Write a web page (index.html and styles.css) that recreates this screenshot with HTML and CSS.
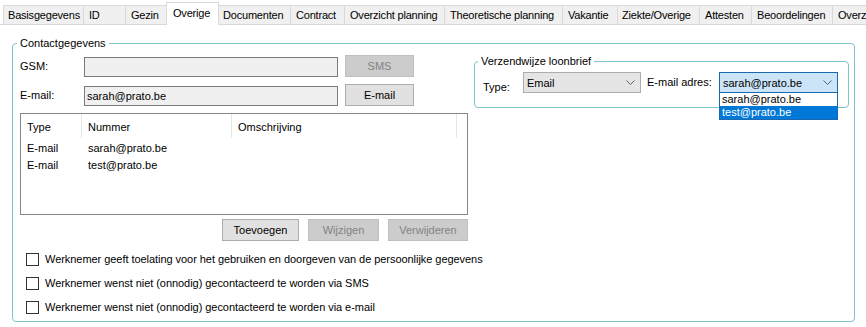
FILE: index.html
```html
<!DOCTYPE html>
<html lang="nl">
<head>
    <meta charset="UTF-8">
    <title>Werknemer - Overige</title>
    <link rel="stylesheet" href="styles.css">
</head>
<body>
    <div class="tabs">
        <div class="tab">Basisgegevens</div>
        <div class="tab">ID</div>
        <div class="tab">Gezin</div>
        <div class="tab active">Overige</div>
        <div class="tab">Documenten</div>
        <div class="tab">Contract</div>
        <div class="tab">Overzicht planning</div>
        <div class="tab">Theoretische planning</div>
        <div class="tab">Vakantie</div>
        <div class="tab">Ziekte/Overige</div>
        <div class="tab">Attesten</div>
        <div class="tab">Beoordelingen</div>
        <div class="tab">Overzicht</div>
    </div>

    <div class="group contact">
        <div class="group-title">Contactgegevens</div>
        <div class="contact-top">
            <div class="contact-left">
                <div class="field-row">
                    <span class="field-label">GSM:</span>
                    <div class="textbox"></div>
                    <button class="btn disabled">SMS</button>
                </div>
                <div class="field-row">
                    <span class="field-label">E-mail:</span>
                    <div class="textbox">sarah@prato.be</div>
                    <button class="btn">E-mail</button>
                </div>

                <div class="listview">
                    <div class="lv-row lv-header">
                        <div class="lv-cell col-type">Type</div>
                        <div class="lv-cell col-nr">Nummer</div>
                        <div class="lv-cell col-desc">Omschrijving</div>
                    </div>
                    <div class="lv-row">
                        <div class="lv-cell col-type">E-mail</div>
                        <div class="lv-cell col-nr">sarah@prato.be</div>
                        <div class="lv-cell col-desc"></div>
                    </div>
                    <div class="lv-row">
                        <div class="lv-cell col-type">E-mail</div>
                        <div class="lv-cell col-nr">test@prato.be</div>
                        <div class="lv-cell col-desc"></div>
                    </div>
                </div>

                <div class="list-buttons">
                    <button class="btn btn-add">Toevoegen</button>
                    <button class="btn btn-edit disabled">Wijzigen</button>
                    <button class="btn btn-del disabled">Verwijderen</button>
                </div>
            </div>

            <div class="group payslip">
                <div class="group-title">Verzendwijze loonbrief</div>
                <div class="payslip-row">
                    <span class="payslip-label type-label">Type:</span>
                    <div class="combo combo-type">
                        <span>Email</span>
                        <svg class="chevron" width="9" height="5" viewBox="0 0 9 5"><polyline points="0.5,0.5 4.5,4.5 8.5,0.5" fill="none" stroke="#606060"/></svg>
                    </div>
                    <span class="payslip-label mail-label">E-mail adres:</span>
                    <div class="combo combo-mail focused">
                        <span>sarah@prato.be</span>
                        <svg class="chevron" width="9" height="5" viewBox="0 0 9 5"><polyline points="0.5,0.5 4.5,4.5 8.5,0.5" fill="none" stroke="#606060"/></svg>
                        <div class="combo-list">
                            <div class="combo-item">sarah@prato.be</div>
                            <div class="combo-item selected">test@prato.be</div>
                        </div>
                    </div>
                </div>
            </div>
        </div>

        <div class="checks">
            <label class="check-row"><span class="checkbox"></span>Werknemer geeft toelating voor het gebruiken en doorgeven van de persoonlijke gegevens</label>
            <label class="check-row"><span class="checkbox"></span>Werknemer wenst niet (onnodig) gecontacteerd te worden via SMS</label>
            <label class="check-row"><span class="checkbox"></span>Werknemer wenst niet (onnodig) gecontacteerd te worden via e-mail</label>
        </div>
    </div>
</body>
</html>
```

FILE: styles.css
```css
body {
    margin: 0;
    background: #fff;
    font-family: "Liberation Sans", Arial, sans-serif;
    font-size: 11px;
    color: #000;
    overflow: hidden;
}

/* tab strip */
.tabs {
    display: flex;
    align-items: flex-end;
    height: 24px;
    padding-left: 3px;
    border-bottom: 1px solid #d9d9d9;
    white-space: nowrap;
    letter-spacing: -0.2px;
}
.tab {
    box-sizing: border-box;
    height: 19px;
    line-height: 18px;
    padding-left: 5px;
    background: #f0f0f0;
    border: 1px solid #d9d9d9;
    border-width: 1px 0 0 1px;
    flex-shrink: 0;
    overflow: hidden;
}
.tab.active {
    height: 23px;
    margin-bottom: -1px;
    line-height: 20px;
    padding-left: 6px;
    background: #fff;
    border-right-width: 1px;
    position: relative;
    z-index: 1;
}
.tab.active + .tab {
    border-left-width: 0;
}
.tab:nth-child(1) { width: 80px; padding-left: 4px; }
.tab:nth-child(2) { width: 42px; }
.tab:nth-child(3) { width: 41px; }
.tab:nth-child(4) { width: 53px; }
.tab:nth-child(5) { width: 71px; padding-left: 4px; }
.tab:nth-child(6) { width: 54px; }
.tab:nth-child(7) { width: 100px; }
.tab:nth-child(8) { width: 118px; }
.tab:nth-child(9) { width: 55px; }
.tab:nth-child(10) { width: 82px; padding-left: 4px; }
.tab:nth-child(11) { width: 52px; }
.tab:nth-child(12) { width: 81px; }
.tab:nth-child(13) { width: 90px; }

/* group boxes */
.group {
    box-sizing: border-box;
    border: 1px solid #7ec4cc;
    border-radius: 4px;
}
.group-title {
    width: fit-content;
    line-height: 13px;
    padding: 0 3px;
    margin-top: -7px;
    background: #fff;
}
.contact {
    width: 843px;
    margin: 18px 0 0 12px;
    padding: 0 4px 2px 7px;
}
.contact > .group-title {
    margin-left: -3px;
}
.contact-top {
    display: flex;
    align-items: flex-start;
    gap: 6px;
    margin-top: 5px;
}
.contact-left {
    width: 448px;
}

/* fields */
.field-row {
    display: flex;
    align-items: flex-end;
    height: 22px;
    margin-bottom: 7px;
}
.field-label {
    width: 64px;
    align-self: center;
}
.textbox {
    box-sizing: border-box;
    width: 254px;
    height: 20px;
    line-height: 18px;
    padding-left: 2px;
    margin-right: 7px;
    background: #f0f0f0;
    border: 1px solid #7a7a7a;
}
.btn {
    box-sizing: border-box;
    width: 69px;
    height: 22px;
    padding: 0;
    font: inherit;
    color: #000;
    background: #e1e1e1;
    border: 1px solid #adadad;
}
.btn.disabled {
    color: #838383;
    background: #cccccc;
    border-color: #bfbfbf;
}

/* list view */
.listview {
    box-sizing: border-box;
    height: 102px;
    border: 1px solid #828790;
}
.lv-row {
    display: flex;
    height: 17px;
    line-height: 17px;
}
.lv-header {
    height: 26px;
    line-height: 26px;
}
.lv-cell {
    box-sizing: border-box;
    padding-left: 6px;
    white-space: nowrap;
}
.lv-header .lv-cell {
    border-right: 1px solid #e5e5e5;
    height: 24px;
    line-height: 26px;
}
.col-type { width: 61px; }
.col-nr { width: 150px; }
.col-desc { width: 225px; }

.list-buttons {
    display: flex;
    justify-content: flex-end;
    gap: 9px;
    margin-top: 4px;
}
.btn-add { width: 77px; }
.btn-edit { width: 71px; }
.btn-del { width: 80px; }

/* verzendwijze loonbrief */
.payslip {
    width: 375px;
    margin-top: 6px;
    padding: 0 10px 14px 8px;
}
.payslip > .group-title {
    margin-left: -5px;
}
.payslip-row {
    display: flex;
    height: 21px;
    margin-top: 4px;
}
.payslip-label {
    line-height: 13px;
}
.type-label {
    width: 40px;
    padding-top: 9px;
}
.mail-label {
    width: 72px;
    padding-top: 4px;
    margin-left: 6px;
}
.combo {
    box-sizing: border-box;
    display: flex;
    align-items: center;
    justify-content: space-between;
    height: 21px;
    padding: 0 5px 0 3px;
    background: #e5e5e5;
    border: 1px solid #adadad;
    position: relative;
}
.combo-type { width: 118px; }
.combo-mail { width: 119px; }
.combo.focused {
    background: #cce4f7;
    border-color: #1a68b0;
}
.chevron {
    display: block;
}
.combo-list {
    position: absolute;
    top: 100%;
    left: -1px;
    width: 119px;
    box-sizing: border-box;
    background: #fff;
    border: 1px solid #1a68b0;
    z-index: 5;
}
.combo-item {
    height: 13px;
    line-height: 13px;
    padding-left: 2px;
}
.combo-item.selected {
    background: #0078d7;
    color: #fff;
}

/* checkboxes */
.checks {
    margin: 6px 0 0 6px;
    letter-spacing: -0.05px;
}
.check-row {
    display: flex;
    align-items: center;
    height: 24px;
}
.checkbox {
    box-sizing: border-box;
    width: 13px;
    height: 13px;
    margin-right: 6px;
    border: 1px solid #333;
    background: #fff;
}
```
